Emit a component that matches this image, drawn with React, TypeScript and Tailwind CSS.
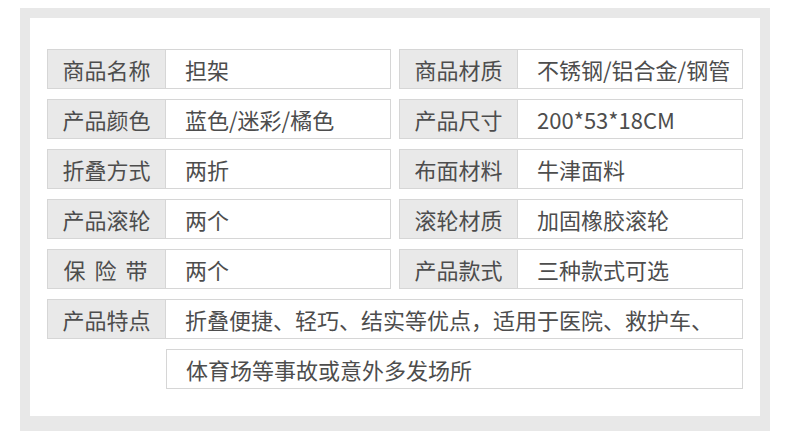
const rows: [string, string, string, string][] = [
  ['商品名称', '担架', '商品材质', '不锈钢/铝合金/钢管'],
  ['产品颜色', '蓝色/迷彩/橘色', '产品尺寸', '200*53*18CM'],
  ['折叠方式', '两折', '布面材料', '牛津面料'],
  ['产品滚轮', '两个', '滚轮材质', '加固橡胶滚轮'],
  ['保 险 带', '两个', '产品款式', '三种款式可选'],
];

function Cell({ label, value }: { label: string; value: string }) {
  const spaced = label.includes(' ');
  return (
    <div className="flex h-[40px] border border-[#d6d6d6]">
      <div
        className={
          spaced
            ? 'flex w-[118px] shrink-0 items-center justify-center whitespace-pre border-r border-[#d6d6d6] bg-[#e9e9e9] tracking-[2px]'
            : 'flex w-[118px] shrink-0 items-center justify-center whitespace-pre border-r border-[#d6d6d6] bg-[#e9e9e9]'
        }
      >
        {label}
      </div>
      <div className="flex flex-1 items-center bg-white pl-[19px]">{value}</div>
    </div>
  );
}

export default function App() {
  return (
    <div
      className="h-[441px] w-[790px] bg-white pl-[20px] pt-[8px] text-[22px] leading-none text-[#4d4d4d]"
      style={{ fontFamily: '"Noto Sans CJK SC", "Noto Sans", sans-serif' }}
    >
      <div className="w-[750px] bg-[#e8e8e8] px-[10px] pb-[15px] pt-[10px]">
        <div className="flex flex-col gap-[10px] bg-white px-[17px] pb-[27px] pt-[31px]">
          {rows.map((r) => (
            <div key={r[0]} className="grid grid-cols-2 gap-[8px]">
              <Cell label={r[0]} value={r[1]} />
              <Cell label={r[2]} value={r[3]} />
            </div>
          ))}
          <Cell label="产品特点" value="折叠便捷、轻巧、结实等优点，适用于医院、救护车、" />
          <div className="ml-[119px] flex h-[40px] items-center border border-[#d6d6d6] pl-[19px]">
            体育场等事故或意外多发场所
          </div>
        </div>
      </div>
    </div>
  );
}
